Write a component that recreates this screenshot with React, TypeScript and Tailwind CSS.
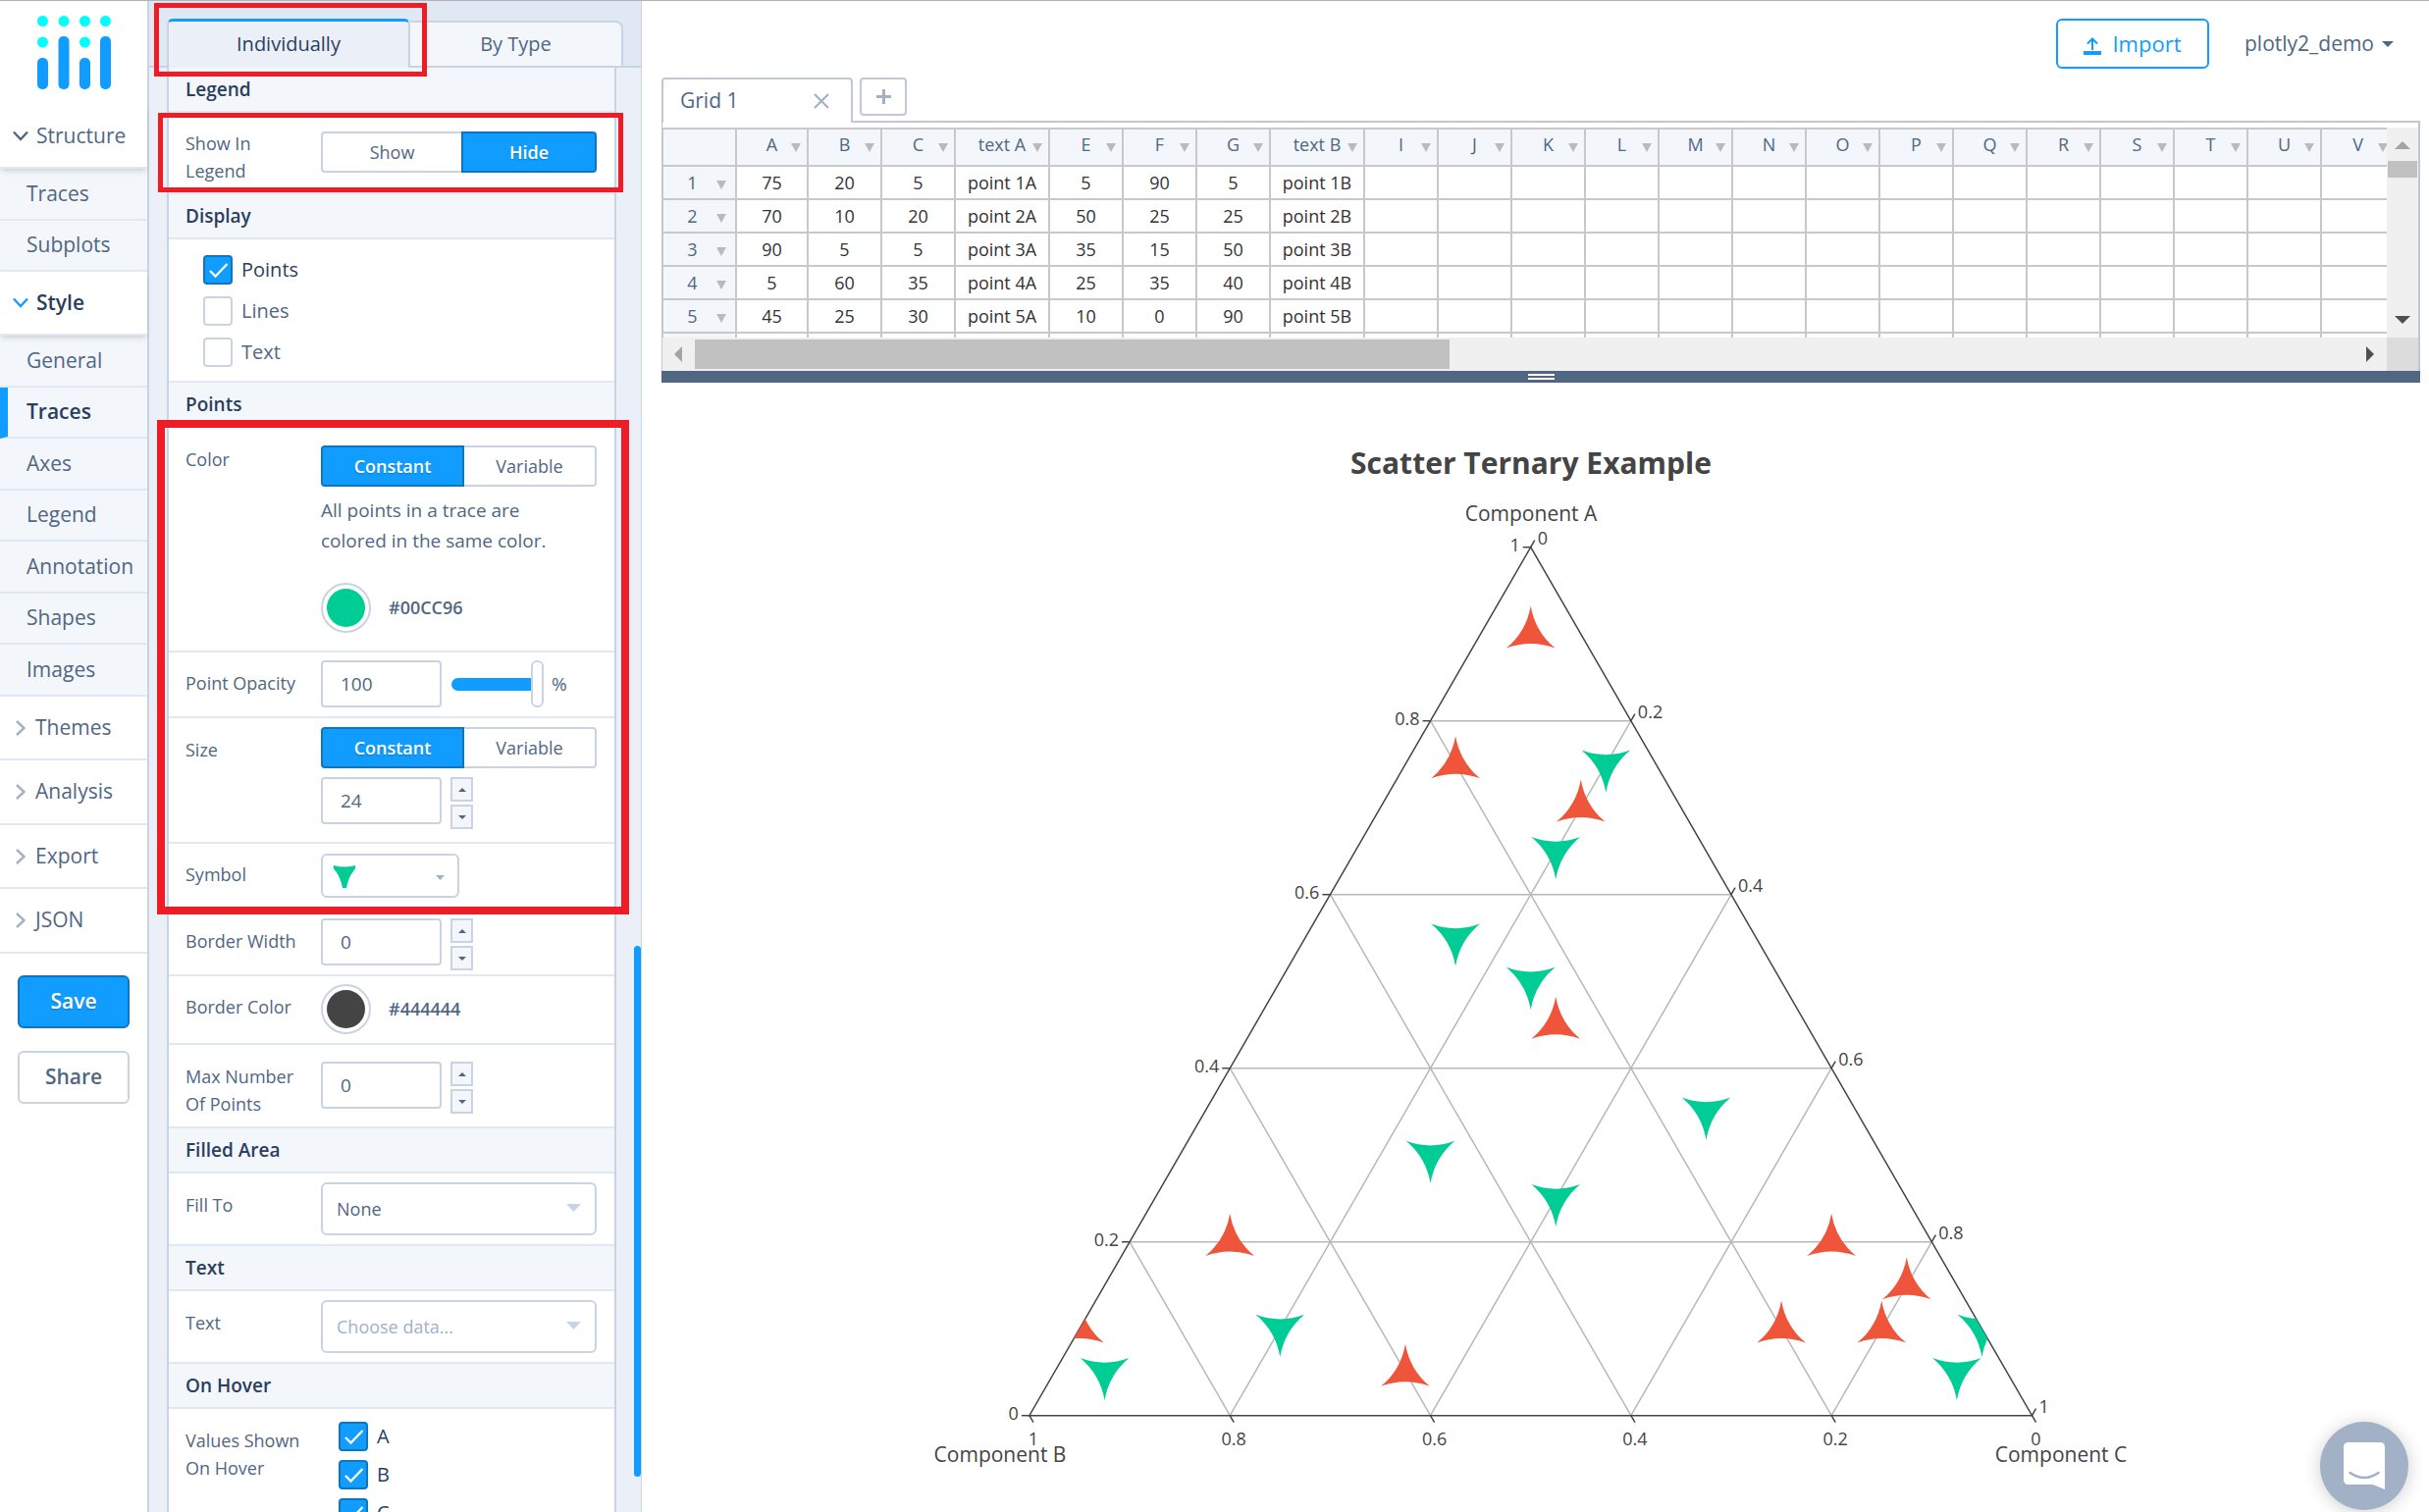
import React from "react";

/* ---------- shared pieces ---------- */

function Caret({ up = false, className = "" }: { up?: boolean; className?: string }) {
  return (
    <svg viewBox="0 0 10 6" preserveAspectRatio="none" className={className} aria-hidden="true">
      <path d={up ? "M0 6L5 0L10 6Z" : "M0 0H10L5 6Z"} fill="currentColor" />
    </svg>
  );
}

function Highlight({ className }: { className: string }) {
  return <div className={"pointer-events-none absolute z-20 border-[#ee1c25] " + className} />;
}

/* ---------- left navigation ---------- */

function Logo() {
  return (
    <a href="#home" aria-label="Plotly home" className="block h-[106px] w-full pt-[15px] pl-[38px]">
      <svg width="75" height="76" viewBox="0 0 75 76" aria-hidden="true">
        <g fill="#00fffb">
          <circle cx="5.5" cy="5.5" r="5.5" />
          <circle cx="27" cy="5.5" r="5.5" />
          <circle cx="48.500" cy="5.5" r="5.5" />
          <circle cx="69.500" cy="5.5" r="5.5" />
          <circle cx="5.5" cy="27" r="5.5" />
          <circle cx="48.500" cy="27" r="5.5" />
        </g>
        <g fill="#119dff">
          <rect x="0" y="43" width="11" height="32" rx="5" />
          <rect x="21.500" y="21" width="11" height="54" rx="5" />
          <rect x="43" y="43" width="11" height="32" rx="5" />
          <rect x="64" y="21" width="11" height="54" rx="5" />
        </g>
      </svg>
    </a>
  );
}

function OpenSection({ label, active = false }: { label: string; active?: boolean }) {
  return (
    <button
      className={
        "relative z-10 flex h-[65px] w-full items-center gap-2 border-b-2 border-[#dfe8f3] bg-white pl-[13px] text-[21px] shadow-md " +
        (active ? "font-semibold text-[#2a3f5f]" : "text-[#506784]")
      }
    >
      <svg width="16" height="11" viewBox="0 0 16 11" aria-hidden="true">
        <path d="M1 1.500L8 9L15 1.500" fill="none" stroke={active ? "#119dff" : "#506784"} strokeWidth="2.400" />
      </svg>
      {label}
    </button>
  );
}

function ClosedSection({ label }: { label: string }) {
  return (
    <button className="flex h-[65px] w-full items-center gap-[10px] border-b-2 border-[#dfe8f3] bg-white pl-4 text-[21px] text-[#506784] even:h-[66px]">
      <svg width="10" height="16" viewBox="0 0 10 16" aria-hidden="true">
        <path d="M1 1L8.500 8L1 15" fill="none" stroke="#a2b1c6" strokeWidth="2.400" />
      </svg>
      {label}
    </button>
  );
}

function SubItem({ label, active = false }: { label: string; active?: boolean }) {
  return (
    <a
      href={"#" + label.toLowerCase()}
      className={
        "flex h-[53px] items-center border-b-2 border-b-[#dfe8f3] bg-[#f3f6fa] text-[21px] even:h-[52px] " +
        (active
          ? "border-l-8 border-l-[#119dff] pl-[19px] font-semibold text-[#2a3f5f]"
          : "pl-[27px] text-[#506784]")
      }
    >
      {label}
    </a>
  );
}

function Sidebar() {
  return (
    <nav className="w-[152px] shrink-0 border-r-2 border-[#c8d4e3] bg-white">
      <Logo />
      <OpenSection label="Structure" />
      <div>
        <SubItem label="Traces" />
        <SubItem label="Subplots" />
      </div>
      <OpenSection label="Style" active />
      <div>
        <SubItem label="General" />
        <SubItem label="Traces" active />
        <SubItem label="Axes" />
        <SubItem label="Legend" />
        <SubItem label="Annotation" />
        <SubItem label="Shapes" />
        <SubItem label="Images" />
      </div>
      <div>
        <ClosedSection label="Themes" />
        <ClosedSection label="Analysis" />
        <ClosedSection label="Export" />
        <ClosedSection label="JSON" />
      </div>
      <div className="flex flex-col gap-[23px] px-[18px] pt-[22px]">
        <button className="h-[54px] rounded-md border-2 border-[#0d76bf] bg-[#119dff] text-[21px] font-semibold text-white text-shadow-sm">
          Save
        </button>
        <button className="h-[54px] rounded-md border-2 border-[#c8d4e3] bg-white text-[21px] font-semibold text-[#506784]">
          Share
        </button>
      </div>
    </nav>
  );
}

/* ---------- style panel ---------- */

function Heading({ children }: { children: React.ReactNode }) {
  return (
    <h2 className="flex h-[46px] items-center border-b-2 border-[#dfe8f3] bg-[#f3f6fa] pl-[17px] text-[19px] font-semibold text-[#2a3f5f]">
      {children}
    </h2>
  );
}

function Row({
  label,
  htmlFor,
  className = "",
  labelClass,
  children,
}: {
  label: string;
  htmlFor?: string;
  className?: string;
  labelClass: string;
  children: React.ReactNode;
}) {
  return (
    <div className={"relative flex items-start border-b-2 border-[#dfe8f3] bg-white pl-[17px] " + className}>
      <label htmlFor={htmlFor} className={"w-[138px] shrink-0 text-[18px] leading-7 text-[#506784] " + labelClass}>
        {label}
      </label>
      <div className="flex-1 pr-[18px]">{children}</div>
    </div>
  );
}

function Toggle({ options, selected, cols }: { options: string[]; selected: number; cols: string }) {
  return (
    <div className={"grid h-[42px] " + cols}>
      {options.map((option, i) => (
        <button
          key={option}
          aria-pressed={i === selected}
          className={
            "border-2 text-[18px] first:rounded-l-[4px] last:rounded-r-[4px] " +
            (i === selected
              ? "border-[#0d76bf] bg-[#119dff] font-semibold text-white text-shadow-sm"
              : "border-[#c8d4e3] bg-white text-[#506784] first:border-r-0 last:border-l-0")
          }
        >
          {option}
        </button>
      ))}
    </div>
  );
}

function Check({
  label,
  checked = false,
  className = "",
}: {
  label: string;
  checked?: boolean;
  className?: string;
}) {
  return (
    <label className={"flex items-center gap-[9px] text-[20px] leading-[30px] " + className}>
      <span className="relative block size-[30px]">
        <input
          type="checkbox"
          defaultChecked={checked}
          className="block size-[30px] appearance-none rounded-[4px] border-2 border-[#c8d4e3] bg-white checked:border-[#0d76bf] checked:bg-[#119dff]"
        />
        {checked && (
          <svg viewBox="0 0 30 30" className="pointer-events-none absolute inset-0" aria-hidden="true">
            <path d="M7 16L12.500 21.500L24.500 9" fill="none" stroke="#ffffff" strokeWidth="2.300" />
          </svg>
        )}
      </span>
      <span className={checked ? "text-[#2a3f5f]" : "text-[#506784]"}>{label}</span>
    </label>
  );
}

const boxClass = "h-12 w-[123px] rounded-[4px] border-2 border-[#c8d4e3] bg-white pl-[18px] text-[19px] text-[#506784]";

function NumberBox({ id, value }: { id: string; value: string }) {
  return (
    <div className="flex items-start gap-[9px]">
      <input id={id} type="text" defaultValue={value} className={boxClass} />
      <div className="flex flex-col gap-[3px]">
        <button
          aria-label="Increase"
          className="grid h-[25px] w-[23px] place-items-center border-2 border-[#c8d4e3] bg-[#f3f6fa] text-[#506784]"
        >
          <Caret up className="h-1 w-2" />
        </button>
        <button
          aria-label="Decrease"
          className="grid h-[25px] w-[23px] place-items-center border-2 border-[#c8d4e3] bg-[#f3f6fa] text-[#506784]"
        >
          <Caret className="h-1 w-2" />
        </button>
      </div>
    </div>
  );
}

function Swatch({ hex, fill }: { hex: string; fill: string }) {
  return (
    <div className="flex items-center gap-[18px]">
      <button
        aria-label={"Pick color " + hex}
        className="grid size-[51px] place-items-center rounded-full border-2 border-[#c8d4e3] bg-white"
      >
        <span className={"size-[39px] rounded-full " + fill} />
      </button>
      <span className="text-[18px] font-semibold text-[#506784]">{hex}</span>
    </div>
  );
}

function Dropdown({ id, value, muted = false }: { id: string; value: string; muted?: boolean }) {
  return (
    <div className="relative">
      <select
        id={id}
        defaultValue={value}
        className={
          "block h-[54px] w-full appearance-none rounded-md border-2 border-[#c8d4e3] bg-white pl-[14px] text-[18px] " +
          (muted ? "text-[#a2b1c6]" : "text-[#506784]")
        }
      >
        <option>{value}</option>
      </select>
      <Caret className="pointer-events-none absolute top-[22px] right-4 h-2 w-[15px] text-[#c8d4e3]" />
    </div>
  );
}

function StylePanel() {
  return (
    <section className="relative flex w-[502px] shrink-0 flex-col border-r border-[#c8d4e3] bg-[#ebf0f8]">
      <div className="flex h-[68px] items-end border-b-2 border-[#c8d4e3] bg-[#e0e8f3] pr-[18px] pl-[18px]" role="tablist">
        <div className="relative -mb-[2px] w-[248px]">
          <button
            role="tab"
            aria-selected="true"
            className="block h-[50px] w-full rounded-t-md border-x-2 border-t-[3px] border-x-[#c8d4e3] border-t-[#119dff] bg-[#ebf0f8] pb-[2px] text-[20px] text-[#2a3f5f]"
          >
            Individually
          </button>
          <Highlight className="-top-4 -right-[17px] -bottom-[9px] -left-[13px] border-[5px]" />
        </div>
        <button
          role="tab"
          aria-selected="false"
          className="h-[46px] flex-1 rounded-tr-lg border-t-2 border-r-2 border-[#c8d4e3] bg-[#f3f6fa] text-[20px] text-[#506784]"
        >
          By Type
        </button>
      </div>

      <div className="min-h-0 flex-1 overflow-hidden pr-[25px] pl-[18px]">
        <div className="min-h-full border-x-2 border-[#c8d4e3] bg-white">
          <Heading>Legend</Heading>
          <Row label="Show In Legend" className="h-[83px]" labelClass="pt-[17px] pr-12">
            <div className="pt-[19px]">
              <Toggle options={["Show", "Hide"]} selected={1} cols="grid-cols-[143px_1fr]" />
            </div>
            <Highlight className="top-0 -right-[9px] bottom-0 -left-[11px] border-[5px]" />
          </Row>

          <Heading>Display</Heading>
          <div className="flex flex-col gap-3 border-b-2 border-[#dfe8f3] pt-4 pb-[14px] pl-[35px]">
            <Check label="Points" checked />
            <Check label="Lines" />
            <Check label="Text" />
          </div>

          <Heading>Points</Heading>
          <div className="relative">
            <Row label="Color" className="h-[229px]" labelClass="pt-[18px]">
              <div className="pt-[18px]">
                <Toggle options={["Constant", "Variable"]} selected={0} cols="grid-cols-[146px_1fr]" />
              </div>
              <p className="pt-[9px] pr-6 text-[19px] leading-[31px] text-[#506784]">
                All points in a trace are colored in the same color.
              </p>
              <div className="pt-[27px]">
                <Swatch hex="#00CC96" fill="bg-[#00cc96]" />
              </div>
            </Row>
            <Row label="Point Opacity" htmlFor="opacity" className="h-[67px]" labelClass="pt-[17px]">
              <div className="flex items-center gap-2 pt-2 text-[19px] text-[#506784]">
                <input id="opacity" type="text" defaultValue="100" className={boxClass} />
                <input
                  type="range"
                  aria-label="Point opacity"
                  defaultValue={100}
                  className="ml-[2px] h-12 w-[94px] appearance-none bg-transparent [&::-webkit-slider-runnable-track]:h-[13px] [&::-webkit-slider-runnable-track]:rounded-full [&::-webkit-slider-runnable-track]:bg-[#119dff] [&::-webkit-slider-thumb]:-mt-[18px] [&::-webkit-slider-thumb]:h-12 [&::-webkit-slider-thumb]:w-[13px] [&::-webkit-slider-thumb]:appearance-none [&::-webkit-slider-thumb]:rounded-md [&::-webkit-slider-thumb]:border-2 [&::-webkit-slider-thumb]:border-[#c8d4e3] [&::-webkit-slider-thumb]:bg-white"
                />
                <span>%</span>
              </div>
            </Row>
            <Row label="Size" htmlFor="size" className="h-[128px]" labelClass="pt-[18px]">
              <div className="pt-[9px] pb-[9px]">
                <Toggle options={["Constant", "Variable"]} selected={0} cols="grid-cols-[146px_1fr]" />
              </div>
              <NumberBox id="size" value="24" />
            </Row>
            <Row label="Symbol" className="h-[66px]" labelClass="pt-[17px]">
              <button
                aria-label="Symbol"
                className="mt-[10px] flex h-[45px] w-[141px] items-center justify-between rounded-md border-2 border-[#c8d4e3] bg-white pr-[13px] pl-[10px]"
              >
                <svg width="24" height="24" viewBox="-12 -9 24 24" aria-hidden="true">
                  <path
                    d="M-11 -8Q0 -5 11 -8Q12 -5 9 -2Q4 4 2 15H-2Q-4 4 -9 -2Q-12 -5 -11 -8Z"
                    fill="#00cc96"
                  />
                </svg>
                <Caret className="mt-1 h-[5px] w-[9px] text-[#a2b1c6]" />
              </button>
            </Row>
            <Highlight className="-top-2 -right-[15px] -bottom-[6px] -left-3 border-8" />
          </div>
          <Row label="Border Width" htmlFor="border-width" className="h-[69px]" labelClass="pt-[19px]">
            <div className="pt-[10px]">
              <NumberBox id="border-width" value="0" />
            </div>
          </Row>
          <Row label="Border Color" className="h-[70px]" labelClass="pt-[17px]">
            <div className="pt-2">
              <Swatch hex="#444444" fill="bg-[#444444]" />
            </div>
          </Row>
          <Row label="Max Number Of Points" htmlFor="max-points" className="h-[85px]" labelClass="pt-[18px] pr-5">
            <div className="pt-[17px]">
              <NumberBox id="max-points" value="0" />
            </div>
          </Row>

          <Heading>Filled Area</Heading>
          <Row label="Fill To" htmlFor="fill-to" className="h-[74px]" labelClass="pt-[18px]">
            <div className="pt-[9px]">
              <Dropdown id="fill-to" value="None" />
            </div>
          </Row>

          <Heading>Text</Heading>
          <Row label="Text" htmlFor="text-data" className="h-[74px]" labelClass="pt-[18px]">
            <div className="pt-[9px]">
              <Dropdown id="text-data" value="Choose data..." muted />
            </div>
          </Row>

          <Heading>On Hover</Heading>
          <Row label="Values Shown On Hover" className="border-b-0" labelClass="pt-[18px] pr-5">
            <div className="flex flex-col gap-[9px] pt-[13px] pl-[18px]">
              <Check label="A" checked />
              <Check label="B" checked />
              <Check label="C" checked />
            </div>
          </Row>
        </div>
      </div>
      <div className="absolute right-0 bottom-9 h-[541px] w-[7px] rounded-full bg-[#119dff]" />
    </section>
  );
}

/* ---------- data grid ---------- */

const columns = [
  "A", "B", "C", "text A", "E", "F", "G", "text B", "I", "J", "K", "L",
  "M", "N", "O", "P", "Q", "R", "S", "T", "U", "V",
];

const rows = [
  ["75", "20", "5", "point 1A", "5", "90", "5", "point 1B"],
  ["70", "10", "20", "point 2A", "50", "25", "25", "point 2B"],
  ["90", "5", "5", "point 3A", "35", "15", "50", "point 3B"],
  ["5", "60", "35", "point 4A", "25", "35", "40", "point 4B"],
  ["45", "25", "30", "point 5A", "10", "0", "90", "point 5B"],
  [],
];

function DataGrid() {
  return (
    <div className="border-t-2 border-r-2 border-l border-[#bec8d9] pt-[5px]">
      <div className="flex h-[214px]">
        <div className="min-w-0 flex-1 overflow-hidden">
          <table className="w-[1766px] table-fixed border-separate border-spacing-0 border-t-2 border-l border-[#c8c8c8] text-center text-[18px]">
            <colgroup>
              <col className="w-[75px]" />
              {columns.map((name, i) => (
                <col key={name} className={i === 0 ? "w-[73px]" : name.startsWith("text") ? "w-24" : "w-[75px]"} />
              ))}
            </colgroup>
            <thead>
              <tr className="h-[38px] bg-[#f3f6fa] text-[#506784]">
                <th aria-label="Row number" className="border-r-2 border-b-2 border-[#c8c8c8]" />
                {columns.map((name) => (
                  <th key={name} scope="col" className="relative border-r-2 border-b-2 border-[#c8c8c8] p-0 pb-[5px] font-normal">
                    {name}
                    <Caret className="absolute top-[14px] right-[6px] h-[9px] w-[10px] text-[#bababa]" />
                  </th>
                ))}
              </tr>
            </thead>
            <tbody>
              {rows.map((row, r) => (
                <tr key={r} className="h-[34px] text-[#333333]">
                  <th
                    scope="row"
                    className="relative border-r-2 border-b-2 border-[#c8c8c8] bg-[#f3f6fa] p-0 pr-[14px] font-normal text-[#506784]"
                  >
                    {r < 5 ? r + 1 : ""}
                    {r < 5 && <Caret className="absolute top-[14px] right-[9px] h-[9px] w-[10px] text-[#bababa]" />}
                  </th>
                  {columns.map((name, c) => (
                    <td key={name} className="border-r-2 border-b-2 border-[#c8c8c8] p-0 whitespace-nowrap">
                      {row[c] || ""}
                    </td>
                  ))}
                </tr>
              ))}
            </tbody>
          </table>
        </div>
        <div className="flex w-8 shrink-0 flex-col items-center bg-[#f0f0f0] pt-[14px] pb-[14px]">
          <Caret up className="h-2 w-4 text-[#a3a3a3]" />
          <div className="mt-3 h-[17px] w-[30px] bg-[#c1c1c1]" />
          <Caret className="mt-auto h-2 w-4 text-[#505050]" />
        </div>
      </div>
      <div className="flex h-[34px]">
        <div className="flex flex-1 items-center bg-[#f0f0f0] pr-[13px] pl-3">
          <svg width="8" height="16" viewBox="0 0 8 16" aria-hidden="true">
            <path d="M8 0V16L0 8Z" fill="#a3a3a3" />
          </svg>
          <div className="ml-[13px] h-[30px] w-[769px] bg-[#c1c1c1]" />
          <svg width="8" height="16" viewBox="0 0 8 16" className="ml-auto" aria-hidden="true">
            <path d="M0 0V16L8 8Z" fill="#505050" />
          </svg>
        </div>
        <div className="w-8 bg-[#dcdcdc]" />
      </div>
    </div>
  );
}

/* ---------- ternary chart ---------- */

const TOP = 167.7;
const BOTTOM = 1052.7;
const MID = 885.7;
const SIDE = 1021.6;
const CHART_H = BOTTOM - TOP;

function place(a: number, b: number, c: number): [number, number] {
  return [MID + ((c - b) / 200) * SIDE, BOTTOM - (a / 100) * CHART_H];
}

const redPoints = [
  [75, 20, 5], [70, 10, 20], [90, 5, 5], [5, 60, 35], [45, 25, 30], [20, 70, 10],
  [10, 90, 0], [20, 10, 70], [15, 5, 80], [10, 10, 80], [10, 20, 70],
];
const greenPoints = [
  [5, 90, 5], [50, 25, 25], [35, 15, 50], [25, 35, 40], [10, 0, 90], [75, 5, 20],
  [65, 15, 20], [55, 30, 15], [30, 45, 25], [10, 70, 20], [5, 5, 90],
];
const UP = "M-24.900 14.400A72 72 0 0 1 24.900 14.400A72 72 0 0 1 0 -28.800A72 72 0 0 1 -24.900 14.400Z";
const DOWN = "M-24.900 -14.400A72 72 0 0 0 24.900 -14.400A72 72 0 0 0 0 28.800A72 72 0 0 0 -24.900 -14.400Z";

function Segment({ from, to }: { from: [number, number]; to: [number, number] }) {
  return <line x1={from[0]} y1={from[1]} x2={to[0]} y2={to[1]} />;
}

function TernaryChart() {
  const steps = [20, 40, 60, 80];
  const ticks = [0, 20, 40, 60, 80, 100];
  const outline = [place(100, 0, 0), place(0, 0, 100), place(0, 100, 0)].map((p) => p.join(",")).join(" ");
  return (
    <svg
      viewBox="0 0 1792 1151"
      preserveAspectRatio="xMidYMin meet"
      className="block min-h-0 w-full flex-1"
      role="img"
      aria-label="Scatter Ternary Example"
    >
      <clipPath id="plot-area">
        <polygon points={outline} />
      </clipPath>
      <g stroke="#b8b8b8" strokeWidth="1.500">
        {steps.map((s) => (
          <g key={s}>
            <Segment from={place(s, 100 - s, 0)} to={place(s, 0, 100 - s)} />
            <Segment from={place(100 - s, s, 0)} to={place(0, s, 100 - s)} />
            <Segment from={place(100 - s, 0, s)} to={place(0, 100 - s, s)} />
          </g>
        ))}
      </g>
      <polygon points={outline} fill="none" stroke="#444444" strokeWidth="1.500" />
      <g stroke="#444444" strokeWidth="1.500">
        {ticks.map((t) => {
          const left = place(t, 100 - t, 0);
          const right = place(100 - t, 0, t);
          const bottom = place(0, t, 100 - t);
          return (
            <g key={t}>
              <Segment from={left} to={[left[0] - 8, left[1]]} />
              <Segment from={right} to={[right[0] + 4, right[1] - 7]} />
              <Segment from={bottom} to={[bottom[0] + 4, bottom[1] + 7]} />
            </g>
          );
        })}
      </g>
      <g clipPath="url(#plot-area)">
        {redPoints.map(([a, b, c], i) => (
          <path key={i} d={UP} fill="#ef553b" transform={"translate(" + place(a, b, c).join(" ") + ")"} />
        ))}
        {greenPoints.map(([a, b, c], i) => (
          <path key={i} d={DOWN} fill="#00cc96" transform={"translate(" + place(a, b, c).join(" ") + ")"} />
        ))}
      </g>
      <g fill="#444444" className="text-[18px]">
        {ticks.map((t) => {
          const left = place(t, 100 - t, 0);
          const right = place(100 - t, 0, t);
          const bottom = place(0, t, 100 - t);
          return (
            <g key={t}>
              <text x={left[0] - 11} y={left[1] + 4} textAnchor="end">{t / 100}</text>
              <text x={right[0] + 7} y={right[1] - 3}>{t / 100}</text>
              <text x={bottom[0] + 4} y={bottom[1] + 30} textAnchor="middle">{t / 100}</text>
            </g>
          );
        })}
      </g>
      <g fill="#444444" textAnchor="middle">
        <text x="886" y="93" className="text-[30px] font-bold">Scatter Ternary Example</text>
        <g className="text-[21px]">
          <text x="886" y="141">Component A</text>
          <text x="345" y="1100">Component B</text>
          <text x="1426" y="1100">Component C</text>
        </g>
      </g>
    </svg>
  );
}

/* ---------- workspace ---------- */

function Workspace() {
  return (
    <main className="relative flex min-w-0 flex-1 flex-col pr-[9px] pl-5">
      <header className="flex h-[78px] shrink-0 items-start justify-end pt-[18px] pr-[27px]">
        <button className="flex h-[51px] w-[156px] items-center justify-center gap-[11px] rounded-md border-2 border-[#119dff] text-[22px] text-[#119dff]">
          <svg width="18" height="18" viewBox="0 0 18 18" className="mt-1" aria-hidden="true">
            <path d="M9 13V2M4 6.500L9 1.500L14 6.500" fill="none" stroke="currentColor" strokeWidth="2" />
            <rect y="14" width="18" height="4" fill="currentColor" />
          </svg>
          Import
        </button>
        <button className="ml-9 flex h-[51px] items-center gap-2 text-[21px] text-[#506784]">
          plotly2_demo
          <Caret className="h-[6px] w-3" />
        </button>
      </header>

      <div className="flex h-11 shrink-0 items-start gap-[7px]">
        <div className="z-10 flex h-[46px] w-[195px] items-center justify-between rounded-t-[4px] border-2 border-b-0 border-[#bec8d9] bg-white pr-[22px] pl-[17px] text-[21px] text-[#506784]">
          Grid 1
          <button aria-label="Close grid">
            <svg width="16" height="16" viewBox="0 0 16 16" className="block" aria-hidden="true">
              <path d="M1 1L15 15M15 1L1 15" stroke="#a2b1c6" strokeWidth="2.200" />
            </svg>
          </button>
        </div>
        <button
          aria-label="Add grid"
          className="grid h-[39px] w-12 place-items-center rounded-[4px] border-2 border-[#bec8d9] bg-white"
        >
          <svg width="17" height="17" viewBox="0 0 17 17" aria-hidden="true">
            <path d="M8.500 1V16M1 8.500H16" stroke="#a2b1c6" strokeWidth="3" />
          </svg>
        </button>
      </div>

      <div className="shrink-0">
        <DataGrid />
        <div className="flex h-3 flex-col items-center justify-center gap-[2px] bg-[#506784]">
          <div className="h-[2px] w-[27px] bg-white" />
          <div className="h-[2px] w-[27px] bg-white" />
        </div>
      </div>

      <TernaryChart />

      <button
        aria-label="Open chat"
        className="absolute right-[21px] bottom-[2px] grid size-[90px] place-items-center rounded-full bg-[#a2b1c6] shadow-[0_2px_18px_rgba(0,0,0,0.2)]"
      >
        <svg width="42" height="48" viewBox="0 0 42 48" aria-hidden="true">
          <path d="M5 0H37Q42 0 42 5V48L30 43H5Q0 43 0 38V5Q0 0 5 0Z" fill="#ffffff" />
          <path d="M6.500 31Q21 41 35.500 31" fill="none" stroke="#a2b1c6" strokeWidth="2.600" strokeLinecap="round" />
        </svg>
      </button>
    </main>
  );
}

export default function App() {
  return (
    <div className="flex h-screen overflow-hidden border-t border-[#b3b3b3] bg-white font-['Open_Sans',sans-serif]">
      <Sidebar />
      <StylePanel />
      <Workspace />
    </div>
  );
}
